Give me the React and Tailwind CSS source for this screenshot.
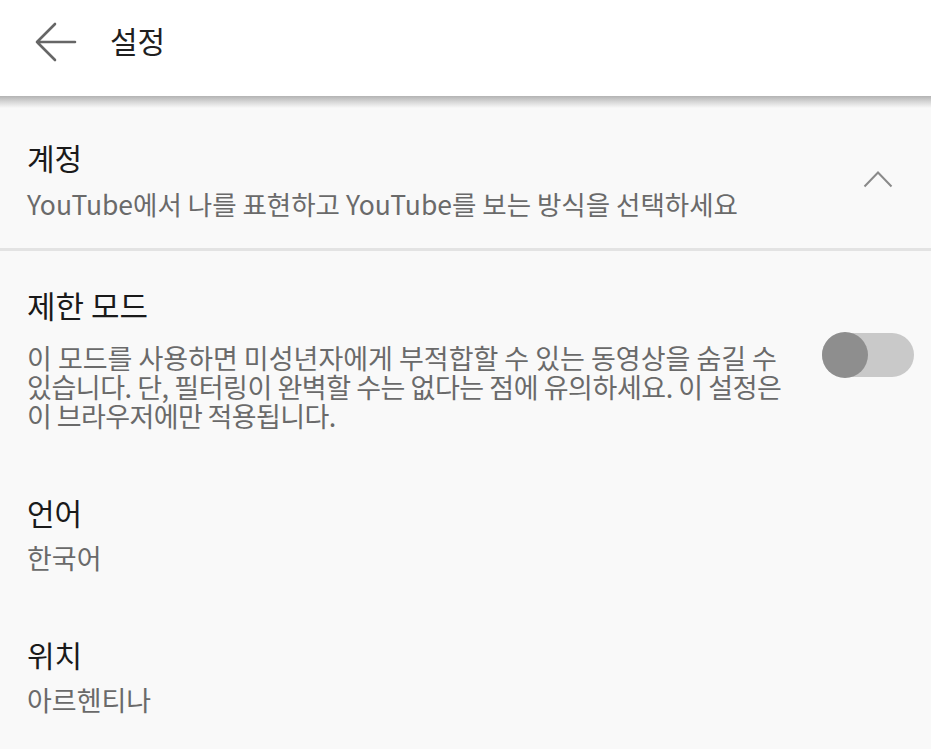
import React from "react";

const font = { fontFamily: '"Noto Sans CJK KR", "Noto Sans", sans-serif' };

const BackArrow = () => (
  <svg width="42" height="40" viewBox="0 0 42 40" fill="none">
    <path
      d="M2 20 H40 M2 20 L20 2 M2 20 L20 38"
      stroke="#666666"
      strokeWidth="2.6"
      strokeLinecap="round"
      strokeLinejoin="round"
    />
  </svg>
);

const ChevronUp = () => (
  <svg width="30" height="18" viewBox="0 0 30 18" fill="none">
    <path d="M1.5 16.5 L15 2.5 L28.5 16.5" stroke="#8a8a8a" strokeWidth="2" />
  </svg>
);

const Toggle = () => (
  <div className="relative w-[92px] h-[46px] flex items-center">
    <div className="w-[92px] h-[44px] rounded-full bg-[#c9c9c9]" />
    <div className="absolute left-0 top-0 w-[46px] h-[46px] rounded-full bg-[#8e8e8e]" />
  </div>
);

const Item = ({ title, sub, className }) => (
  <div className={"pl-[27px] " + (className || "")}>
    <div className="text-[30px] leading-[36px] text-[#1a1a1a]">{title}</div>
    <div className="mt-[13px] text-[27px] leading-[30px] text-[#6a6a6a]">{sub}</div>
  </div>
);

export default function App() {
  return (
    <div className="w-[931px] h-[749px] bg-[#f9f9f9] overflow-hidden" style={font}>
      <div className="h-[96px] bg-white flex items-center pl-[35px] pb-[12px]">
        <BackArrow />
        <span className="ml-[33px] text-[30px] text-[#1f1f1f] leading-none -mt-[4px]">설정</span>
      </div>
      <div className="h-[12px] bg-linear-to-b from-[#b3b3b3] via-[#d8d8d8] to-[#f9f9f9]" />

      <div className="flex items-center pl-[27px] pr-[38px] pt-[31px] pb-[29px]">
        <div className="flex-1">
          <div className="text-[30px] leading-[36px] text-[#1a1a1a]">계정</div>
          <div className="mt-[14px] text-[26.5px] leading-[30px] text-[#6a6a6a] whitespace-nowrap">
            YouTube에서 나를 표현하고 YouTube를 보는 방식을 선택하세요
          </div>
        </div>
        <ChevronUp />
      </div>
      <div className="h-[3px] bg-[#e3e3e3]" />

      <div className="flex pl-[27px] pr-[17px] pt-[36px]">
        <div className="flex-1">
          <div className="text-[31px] leading-[36px] text-[#1a1a1a]">제한 모드</div>
          <div className="mt-[20px] text-[27px] leading-[29px] text-[#6a6a6a] whitespace-nowrap">
            <div>이 모드를 사용하면 미성년자에게 부적합할 수 있는 동영상을 숨길 수</div>
            <div className="tracking-[-0.45px]">있습니다. 단, 필터링이 완벽할 수는 없다는 점에 유의하세요. 이 설정은</div>
            <div className="tracking-[-0.6px]">이 브라우저에만 적용됩니다.</div>
          </div>
        </div>
        <div className="mt-[45px]">
          <Toggle />
        </div>
      </div>

      <Item title="언어" sub="한국어" className="mt-[64px]" />
      <Item title="위치" sub="아르헨티나" className="mt-[63px]" />
    </div>
  );
}
